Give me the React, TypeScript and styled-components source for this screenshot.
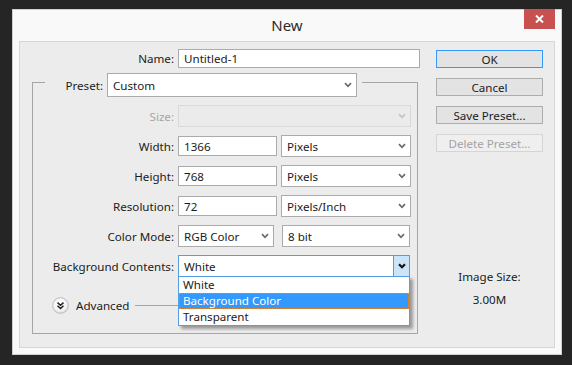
import React from "react";
import styled, { createGlobalStyle } from "styled-components";

const Global = createGlobalStyle`
  html, body { margin: 0; padding: 0; background: #252525; }
  body {
    font-family: "Noto Sans", "Segoe UI", sans-serif;
    font-size: 11.6px;
    color: #1b1b1b;
  }
  * { box-sizing: border-box; }
`;

const Window = styled.div`
  margin: 9px 0 0 12px;
  width: 550px;
  height: 346px;
  background: #f9f9f9;
  border: 1px solid #cfcfcf;
  display: flex;
  flex-direction: column;
`;

const TitleBar = styled.div`
  height: 31px;
  flex: none;
  display: grid;
  grid-template-columns: 1fr auto 1fr;
  align-items: center;
`;

const Title = styled.div`
  grid-column: 2;
  font-size: 15px;
  color: #2b2b2b;
  margin-top: -2px;
`;

const CloseButton = styled.div`
  grid-column: 3;
  justify-self: end;
  align-self: start;
  width: 31px;
  height: 20px;
  margin: -1px 6px 0 0;
  background: #c75050;
  display: flex;
  align-items: center;
  justify-content: center;
`;

const Panel = styled.div`
  margin: 0 6px 6px;
  height: 307px;
  flex: none;
  background: #ececec;
  border: 1px solid #d6d6d6;
  display: flex;
  padding-top: 7px;
`;

const LeftCol = styled.div`
  width: 398px;
  display: flex;
  flex-direction: column;
`;

const Row = styled.div<{ $top?: number; $h?: number }>`
  display: flex;
  align-items: center;
  gap: 4px;
  height: ${(p) => p.$h ?? 22}px;
  margin-top: ${(p) => p.$top ?? 0}px;
  flex: none;
`;

const Label = styled.div<{ $w: number; $disabled?: boolean }>`
  width: ${(p) => p.$w}px;
  text-align: right;
  white-space: nowrap;
  color: ${(p) => (p.$disabled ? "#a6a6a6" : "#1b1b1b")};
  flex: none;
`;

const TextBox = styled.div<{ $w: number; $h?: number }>`
  width: ${(p) => p.$w}px;
  height: ${(p) => p.$h ?? 20}px;
  background: #fff;
  border: 1px solid #ababab;
  padding-left: 5px;
  display: flex;
  align-items: center;
  white-space: nowrap;
  flex: none;
`;

const SelectBox = styled.div<{ $w: number; $h?: number; $ml?: number; $disabled?: boolean; $active?: boolean }>`
  position: relative;
  width: ${(p) => p.$w}px;
  height: ${(p) => p.$h ?? 22}px;
  margin-left: ${(p) => p.$ml ?? 0}px;
  background: ${(p) => (p.$disabled ? "#ebebeb" : "#fff")};
  border: 1px solid ${(p) => (p.$active ? "#569de5" : p.$disabled ? "#d9d9d9" : "#ababab")};
  padding-left: 5px;
  display: flex;
  align-items: center;
  justify-content: space-between;
  white-space: nowrap;
  flex: none;
`;

const ArrowArea = styled.div<{ $active?: boolean }>`
  align-self: stretch;
  width: ${(p) => (p.$active ? 16 : 18)}px;
  display: flex;
  align-items: center;
  justify-content: center;
  background: ${(p) => (p.$active ? "#cce4f7" : "transparent")};
  border-left: 1px solid ${(p) => (p.$active ? "#569de5" : "transparent")};
`;

const Group = styled.div`
  margin: 14px 0 0 12px;
  width: 386px;
  height: 252px;
  border: 1px solid #a5a5a5;
  display: flex;
  flex-direction: column;
  flex: none;
`;

const GroupHeader = styled.div`
  margin: -10px 0 0 12px;
  width: 317px;
  height: 24px;
  background: #ececec;
  display: flex;
  align-items: center;
  gap: 4px;
  flex: none;
`;

const DropList = styled.div`
  position: absolute;
  top: 100%;
  left: -1px;
  width: 232px;
  background: #fff;
  border: 1px solid #569de5;
  box-shadow: 3px 3px 3px rgba(0, 0, 0, 0.35);
  z-index: 5;
  padding: 0;
`;

const DropItem = styled.div<{ $selected?: boolean }>`
  height: 16px;
  line-height: 14px;
  padding-left: 3px;
  border: 1px ${(p) => (p.$selected ? "dotted #d98a3a" : "solid transparent")};
  background: ${(p) => (p.$selected ? "#3399ff" : "#fff")};
  color: ${(p) => (p.$selected ? "#fff" : "#1b1b1b")};
`;

const AdvancedRow = styled.div`
  display: flex;
  align-items: center;
  height: 16px;
  margin-top: 20px;
  padding-left: 19px;
  flex: none;
`;

const AdvancedText = styled.span`
  margin-left: 7px;
`;

const Rule = styled.div`
  flex: 1;
  height: 1px;
  background: #a5a5a5;
  margin: 1px 8px 0 6px;
`;

const RightCol = styled.div`
  margin: 1px 0 0 18px;
  width: 107px;
  display: flex;
  flex-direction: column;
  align-items: center;
  gap: 10px;
`;

const Button = styled.div<{ $primary?: boolean; $disabled?: boolean }>`
  width: 107px;
  height: 18px;
  display: flex;
  align-items: center;
  justify-content: center;
  background: ${(p) => (p.$disabled ? "#efefef" : "#e3e3e3")};
  border: 1px solid ${(p) => (p.$primary ? "#3399ff" : p.$disabled ? "#d5d5d5" : "#adadad")};
  color: ${(p) => (p.$disabled ? "#a3a3a3" : "#1b1b1b")};
  white-space: nowrap;
  flex: none;
`;

const InfoLabel = styled.div<{ $top: number }>`
  height: 16px;
  line-height: 16px;
  margin-top: ${(p) => p.$top - 10}px;
  white-space: nowrap;
`;

const Chevron = ({ color = "#6a6a6a", bold = false }: { color?: string; bold?: boolean }) => (
  <svg width="8" height="6" viewBox="0 0 8 6">
    <path d="M1 1.2 L4 4.3 L7 1.2" stroke={color} strokeWidth={bold ? 2.1 : 1.7} fill="none" />
  </svg>
);

const AdvancedIcon = () => (
  <svg width="17" height="17" viewBox="0 0 17 17">
    <defs>
      <radialGradient id="advg" cx="0.45" cy="0.35" r="0.7">
        <stop offset="0" stopColor="#ffffff" />
        <stop offset="0.7" stopColor="#f2f2f2" />
        <stop offset="1" stopColor="#d6d6d6" />
      </radialGradient>
    </defs>
    <circle cx="8.5" cy="8.5" r="7.8" fill="url(#advg)" stroke="#b8b8b8" strokeWidth="1" />
    <path d="M5.5 5.6 L8.5 8.3 L11.5 5.6 M5.5 8.8 L8.5 11.5 L11.5 8.8" stroke="#222" strokeWidth="1.5" fill="none" />
  </svg>
);

const Select = ({ w, h, ml, text, disabled }: { w: number; h?: number; ml?: number; text?: string; disabled?: boolean }) => (
  <SelectBox $w={w} $h={h} $ml={ml} $disabled={disabled}>
    <span>{text}</span>
    <ArrowArea>
      <Chevron color={disabled ? "#c4c4c4" : "#6a6a6a"} />
    </ArrowArea>
  </SelectBox>
);

export default function App() {
  return (
    <>
      <Global />
      <Window>
        <TitleBar>
          <Title>New</Title>
          <CloseButton>
            <svg width="9" height="8" viewBox="0 0 9 8">
              <path d="M1 0.5 L8 7.5 M8 0.5 L1 7.5" stroke="#fff" strokeWidth="2" />
            </svg>
          </CloseButton>
        </TitleBar>
        <Panel>
          <LeftCol>
            <Row $h={19}>
              <Label $w={154}>Name:</Label>
              <TextBox $w={242} $h={19}>Untitled-1</TextBox>
            </Row>
            <Group>
              <GroupHeader>
                <Label $w={58}>Preset:</Label>
                <Select w={250} h={24} text="Custom" />
              </GroupHeader>
              <Row $top={8}>
                <Label $w={141} $disabled>Size:</Label>
                <Select w={233} disabled />
              </Row>
              <Row $top={8}>
                <Label $w={141}>Width:</Label>
                <TextBox $w={99}>1366</TextBox>
                <Select w={130} text="Pixels" />
              </Row>
              <Row $top={8}>
                <Label $w={141}>Height:</Label>
                <TextBox $w={99}>768</TextBox>
                <Select w={130} text="Pixels" />
              </Row>
              <Row $top={8}>
                <Label $w={141}>Resolution:</Label>
                <TextBox $w={99}>72</TextBox>
                <Select w={130} text="Pixels/Inch" />
              </Row>
              <Row $top={8}>
                <Label $w={141}>Color Mode:</Label>
                <Select w={96} text="RGB Color" />
                <Select w={128} ml={4} text="8 bit" />
              </Row>
              <Row $top={8}>
                <Label $w={141}>Background Contents:</Label>
                <SelectBox $w={232} $active>
                  <span>White</span>
                  <ArrowArea $active>
                    <Chevron color="#111" bold />
                  </ArrowArea>
                  <DropList>
                    <DropItem>White</DropItem>
                    <DropItem $selected>Background Color</DropItem>
                    <DropItem>Transparent</DropItem>
                  </DropList>
                </SelectBox>
              </Row>
              <AdvancedRow>
                <AdvancedIcon />
                <AdvancedText>Advanced</AdvancedText>
                <Rule />
              </AdvancedRow>
            </Group>
          </LeftCol>
          <RightCol>
            <Button $primary>OK</Button>
            <Button>Cancel</Button>
            <Button>Save Preset...</Button>
            <Button $disabled>Delete Preset...</Button>
            <InfoLabel $top={117}>Image Size:</InfoLabel>
            <InfoLabel $top={7}>3.00M</InfoLabel>
          </RightCol>
        </Panel>
      </Window>
    </>
  );
}
